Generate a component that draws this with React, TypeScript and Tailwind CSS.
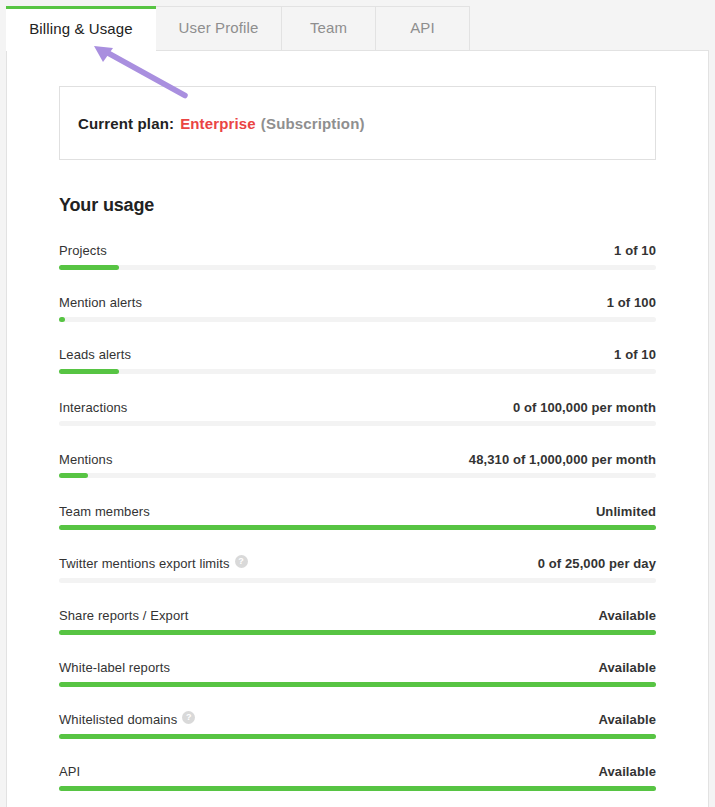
const TABS = ['User Profile', 'Team', 'API'];

const USAGE = [
  { label: 'Projects', value: '1 of 10', pct: 10 },
  { label: 'Mention alerts', value: '1 of 100', pct: 1 },
  { label: 'Leads alerts', value: '1 of 10', pct: 10 },
  { label: 'Interactions', value: '0 of 100,000 per month', pct: 0 },
  { label: 'Mentions', value: '48,310 of 1,000,000 per month', pct: 4.83 },
  { label: 'Team members', value: 'Unlimited', pct: 100 },
  { label: 'Twitter mentions export limits', value: '0 of 25,000 per day', pct: 0, help: true },
  { label: 'Share reports / Export', value: 'Available', pct: 100 },
  { label: 'White-label reports', value: 'Available', pct: 100 },
  { label: 'Whitelisted domains', value: 'Available', pct: 100, help: true },
  { label: 'API', value: 'Available', pct: 100 },
];

function HelpDot() {
  return (
    <span className="ml-[5px] mb-[5px] inline-flex h-[13px] w-[13px] items-center justify-center rounded-full bg-[#d9d9d9] text-[9px] font-bold leading-none text-white">
      ?
    </span>
  );
}

export default function App() {
  return (
    <div className="relative h-[807px] overflow-hidden bg-[#f4f4f4] pl-[6px] pr-[6px] pt-[6px] font-['Liberation_Sans',Arial,sans-serif]">
      {/* Tabs */}
      <div className="relative z-10 flex h-[45px]">
        <div className="flex h-[45px] w-[150px] items-center justify-center border-t-[3px] border-[#57c443] bg-white pb-[2px] text-[15px] tracking-[0.12px] text-[#222]">
          Billing &amp; Usage
        </div>
        {TABS.map((tab, i) => (
          <div
            key={tab}
            className={`flex h-[45px] items-center justify-center border border-l-0 border-[#e2e2e2] bg-[#f4f4f4] text-[15px] tracking-[0.12px] text-[#8e8e8e] ${i === 0 ? 'w-[126px]' : 'w-[94px]'}`}
          >
            {tab}
          </div>
        ))}
      </div>

      {/* Panel */}
      <div className="-mt-px h-[800px] w-[703px] border border-[#e2e2e2] bg-white px-[52px] pt-[35px]">
        <div className="flex h-[74px] items-center border border-[#e0e0e0] px-[18px] pt-[2px] text-[15px] font-bold tracking-[0.15px] text-[#222]">
          <span>Current plan:</span>
          <span className="ml-[6px] text-[#ea4444]">Enterprise</span>
          <span className="ml-[5px] text-[#8f8f8f]">(Subscription)</span>
        </div>

        <h2 className="mt-[34px] text-[18px] font-bold leading-[22px] tracking-[-0.15px] text-[#222]">Your usage</h2>

        <div className="mt-[14px]">
          {USAGE.map((row) => (
            <div key={row.label} className="h-[52.1px] pt-[11px]">
              <div className="flex h-[20px] items-center justify-between text-[13px] tracking-[0.1px] text-[#333]">
                <span className="flex items-center">
                  {row.label}
                  {row.help && <HelpDot />}
                </span>
                <span className="font-bold">{row.value}</span>
              </div>
              <div className="mt-[4px] h-[5px] rounded-full bg-[#f3f3f3]">
                <div
                  className="h-full rounded-full bg-[#57c443]"
                  style={{ width: `${row.pct}%` }}
                />
              </div>
            </div>
          ))}
        </div>
      </div>

      {/* Annotation arrow */}
      <svg className="absolute left-0 top-0 z-20" width="200" height="110" viewBox="0 0 200 110" fill="none">
        <path d="M185 95.5 L108 53" stroke="#a98fdf" strokeWidth="5.5" strokeLinecap="round" />
        <path d="M94 46 L113 48 L103 62 Z" fill="#a98fdf" />
      </svg>
    </div>
  );
}
